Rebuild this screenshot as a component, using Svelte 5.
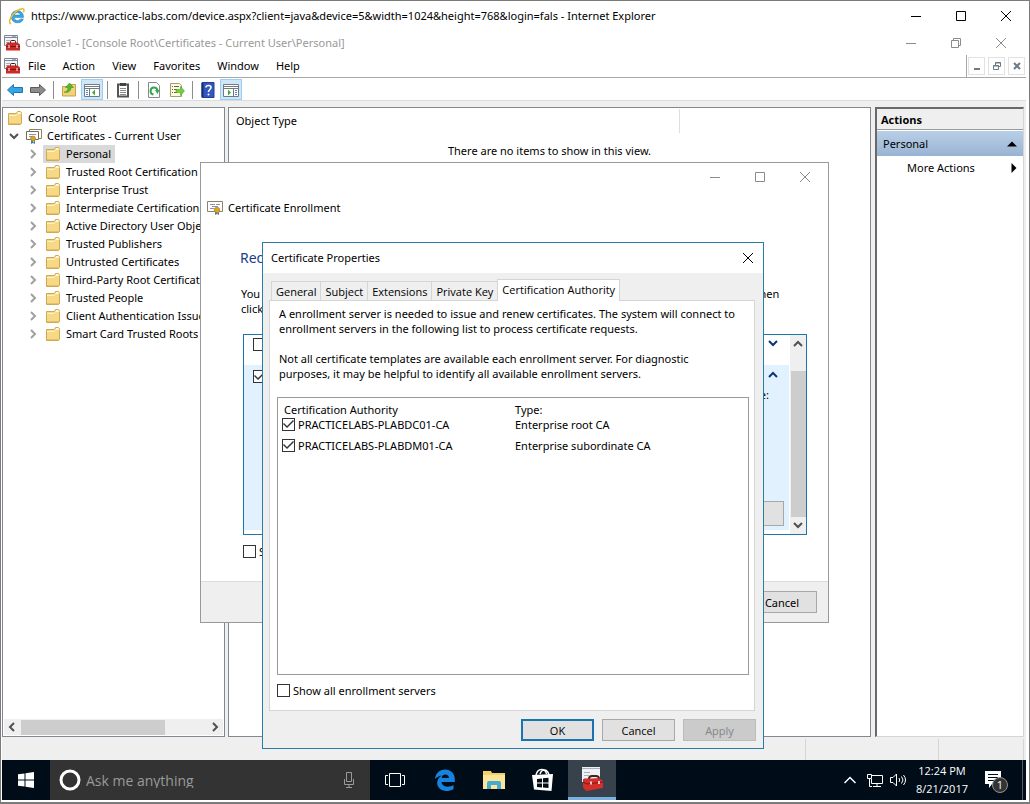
<script>
    const menus = ["File", "Action", "View", "Favorites", "Window", "Help"];

    const stores = [
        "Personal",
        "Trusted Root Certification Authorities",
        "Enterprise Trust",
        "Intermediate Certification Authorities",
        "Active Directory User Object",
        "Trusted Publishers",
        "Untrusted Certificates",
        "Third-Party Root Certification Authorities",
        "Trusted People",
        "Client Authentication Issuers",
        "Smart Card Trusted Roots",
    ];

    const tabs = ["General", "Subject", "Extensions", "Private Key", "Certification Authority"];

    let selected = $state("Personal");
    let activeTab = $state("Certification Authority");
    let showAll = $state(false);
    let authorities = $state([
        { name: "PRACTICELABS-PLABDC01-CA", type: "Enterprise root CA", checked: true },
        { name: "PRACTICELABS-PLABDM01-CA", type: "Enterprise subordinate CA", checked: true },
    ]);
</script>

{#snippet minimize()}
    <svg width="12" height="12" viewBox="0 0 12 12"><path d="M1 6.5h10" /></svg>
{/snippet}

{#snippet maximize()}
    <svg width="12" height="12" viewBox="0 0 12 12"><path d="M1.5 1.5h9v9h-9z" /></svg>
{/snippet}

{#snippet restore()}
    <svg width="12" height="12" viewBox="0 0 12 12"><path d="M1.5 3.5h7v7h-7zM3.5 3.5v-2h7v7h-2" /></svg>
{/snippet}

{#snippet close()}
    <svg width="12" height="12" viewBox="0 0 12 12"><path d="M1 1l10 10M11 1l-10 10" /></svg>
{/snippet}

{#snippet chevron(dir)}
    <svg class="chevron {dir}" width="10" height="10" viewBox="0 0 10 10"><path d="M3 1l4 4-4 4" /></svg>
{/snippet}

{#snippet folder()}
    <svg width="16" height="16" viewBox="0 0 16 16">
        <path d="M1.500 3.500h8l1-2h3l1 1v11l-1 1h-12z" fill="#f6d987" stroke="#d0a954" />
        <path d="M2 5.500h7l1.500-2h4" fill="none" stroke="#fff2c4" />
        <path d="M11 2.500h2" stroke="#fff" />
        <path d="M2 13.500h12" stroke="#e8bf62" />
    </svg>
{/snippet}

{#snippet certificate(stacked)}
    <svg width="16" height="16" viewBox="0 0 16 16">
        {#if stacked}
            <path d="M3.500 1.500h12v9h-12z" fill="#fff" stroke="#8b8468" />
            <path d="M.5 3.500h12v8h-12z" fill="#fff" stroke="#736d58" />
            <path d="M3 6.500h7M3 8.500h3" stroke="#8c93bd" />
            <path d="M5 11v5l2-1v-3M9 11v5l-2-1" fill="#3b83ad" />
            <circle cx="7" cy="10.500" r="2.500" fill="#dda51d" stroke="#a87913" stroke-width=".6" />
        {:else}
            <path d="M.5 2.500h15v10h-15z" fill="#fff" stroke="#8a846c" />
            <path d="M3 5.500h5M9 5.500h4M5 7.500h6M3 9.500h4" stroke="#8c93bd" />
            <path d="M8 11v5l2-1v-3M12 11v5l-2-1" fill="#3b83ad" />
            <circle cx="10" cy="11" r="2.800" fill="#dda51d" stroke="#a87913" stroke-width=".6" />
        {/if}
    </svg>
{/snippet}

{#snippet toolbox()}
    <svg width="16" height="16" viewBox="0 0 16 16">
        <path d="M.5.5h13v10H.5z" fill="#f2f4f7" stroke="#7e8791" />
        <path d="M0 2.500h14" stroke="#7e8791" />
        <path d="M2 5.500h4M2 7.500h3M8 1.500h4" stroke="#a5adb6" />
        <path d="M6.500 8V6.500q0-1 1-1h3q1 0 1 1V8" fill="none" stroke="#3b1715" />
        <path d="M3.500 7.500h10l2.500 2v6H2v-6z" fill="#cb2b27" />
        <path d="M2 11.500h14" stroke="#841411" />
        <path d="M5 10v3M13 10v3" stroke="#fff" />
    </svg>
{/snippet}

<main>
    <header class="titlebar browser">
        <svg width="18" height="18" viewBox="0 0 18 18">
            <path d="M15.500 10.500H6.200c.2 3.300 4.700 4 6.200 1.400h3c-2 5.800-12.200 5.200-12.200-2.400 0-7.800 12.700-8.400 12.300 1zM6.300 8h6c-.3-3-5.500-3.200-6 0z" fill="#3aa5e3" stroke="#1f7fc0" stroke-width=".5" />
            <path d="M3.200 16.800C-1.500 16 4.500 5 12 2.200c4-1.500 4.800.5 3.400 3.200" fill="none" stroke="#e9bb2d" stroke-width="1.500" />
        </svg>
        <h1>https://www.practice-labs.com/device.aspx?client=java&amp;device=5&amp;width=1024&amp;height=768&amp;login=fals - Internet Explorer</h1>
        <div class="controls">
            <button aria-label="Minimize">{@render minimize()}</button>
            <button aria-label="Maximize">{@render maximize()}</button>
            <button aria-label="Close">{@render close()}</button>
        </div>
    </header>

    <header class="titlebar console">
        {@render toolbox()}
        <h2>Console1 - [Console Root\Certificates - Current User\Personal]</h2>
        <div class="controls">
            <button aria-label="Minimize console">{@render minimize()}</button>
            <button aria-label="Restore console">{@render restore()}</button>
            <button aria-label="Close console">{@render close()}</button>
        </div>
    </header>

    <div class="menubar">
        {@render toolbox()}
        <nav>
            {#each menus as menu}
                <button>{menu}</button>
            {/each}
        </nav>
        <div class="mdi">
            <button aria-label="Minimize child">
                <svg width="10" height="10" viewBox="0 0 10 10"><path d="M2 8h6" stroke-width="2" /></svg>
            </button>
            <button aria-label="Restore child">
                <svg width="10" height="10" viewBox="0 0 10 10"><path d="M1.500 4.500h5v4h-5zM1 5h6M3.500 4V1.500h5v4H7M3 2h6" /></svg>
            </button>
            <button aria-label="Close child">
                <svg width="10" height="10" viewBox="0 0 10 10"><path d="M2 2l6 6M8 2l-6 6" stroke-width="2" /></svg>
            </button>
        </div>
    </div>

    <div class="toolbar">
        <button aria-label="Back">
            <svg width="18" height="16" viewBox="0 0 18 16"><path d="M1.500 8l6-5.500v3h9v5h-9v3z" fill="#35a5e5" stroke="#2674ad" /></svg>
        </button>
        <button aria-label="Forward">
            <svg width="18" height="16" viewBox="0 0 18 16"><path d="M16.500 8l-6-5.500v3h-9v5h9v3z" fill="#8c8c8c" stroke="#5c5c5c" /></svg>
        </button>
        <span class="divider"></span>
        <button aria-label="Up one level">
            <svg width="16" height="16" viewBox="0 0 16 16">
                <path d="M1.500 4.500h6l1-2h6v11.500h-13z" fill="#f2d27b" stroke="#c99f45" />
                <path d="M3 10c3 0 4-2 4-4.500H4.500L8.500 1l4 4.500H10c0 3.500-3 6-7 4.500z" fill="#4fba28" stroke="#338a17" stroke-width=".5" />
            </svg>
        </button>
        <button class="on" aria-label="Show or hide console tree">
            <svg width="16" height="16" viewBox="0 0 16 16">
                <path d="M.5 2.500h15v12H.5z" fill="#fff" stroke="#727b84" />
                <path d="M1 4.500h14M5.500 6v8M1 6.500h14" stroke="#727b84" />
                <path d="M2 8.500h2M2 10.500h2M2 12.500h2" stroke="#4e88ba" />
                <path d="M11 7.500v6L8 10.500z" fill="#42ad32" />
            </svg>
        </button>
        <span class="divider"></span>
        <button aria-label="Paste">
            <svg width="16" height="16" viewBox="0 0 16 16">
                <path d="M3 2.500h10v12H3z" fill="#fff" stroke="#555" stroke-width="2" />
                <path d="M5 1h6v3H5z" fill="#444" />
                <path d="M5 6.500h6M5 8.500h6M5 10.500h6M5 12.500h6" stroke="#8a8a8a" />
            </svg>
        </button>
        <span class="divider"></span>
        <button aria-label="Refresh">
            <svg width="16" height="16" viewBox="0 0 16 16">
                <path d="M2.500.5h8l3 3v12h-11z" fill="#fff" stroke="#858a8e" />
                <path d="M7.500 12.500a3.500 3.500 0 1 1 4-4" fill="none" stroke="#37a54b" stroke-width="2" />
                <path d="M13.500 8H9l2.500 4z" fill="#37a54b" />
            </svg>
        </button>
        <button aria-label="Export list">
            <svg width="16" height="16" viewBox="0 0 16 16">
                <path d="M1.500 1.500h9l2 2v11h-11z" fill="#fff9d8" stroke="#a39b78" />
                <path d="M3 4.500h1M3 7.500h1M3 10.500h1M5 4.500h5M5 7.500h3M5 10.500h3" stroke="#636363" />
                <path d="M7 7.500h4.500v-3l4 4.500-4 4.500v-3H7z" fill="#6fd13e" stroke="#389921" stroke-width=".5" />
            </svg>
        </button>
        <span class="divider"></span>
        <button aria-label="Help topics">
            <svg width="16" height="16" viewBox="0 0 16 16">
                <path d="M2 .5h12v15H2z" fill="#3157c1" stroke="#213f91" />
                <path d="M2.500 1v14" stroke="#1b2f70" stroke-width="2" />
                <path d="M6 5.500q0-2 2.500-2t2.500 2q0 1-1.200 2T8.500 10" fill="none" stroke="#fff" stroke-width="1.600" />
                <circle cx="8.500" cy="12.500" r="1" fill="#fff" />
            </svg>
        </button>
        <button class="on" aria-label="Show or hide action pane">
            <svg width="16" height="16" viewBox="0 0 16 16">
                <path d="M.5 2.500h15v12H.5z" fill="#fff" stroke="#727b84" />
                <path d="M1 4.500h14M10.500 6v8M1 6.500h14" stroke="#727b84" />
                <path d="M12 8.500h2M12 10.500h2M12 12.500h2" stroke="#4e88ba" />
                <path d="M5 7.500v6l3-3z" fill="#42ad32" />
            </svg>
        </button>
    </div>

    <section class="workspace">
        <aside class="tree">
            <div class="node">{@render folder()}<span>Console Root</span></div>
            <div class="node branch">
                {@render chevron("down")}
                {@render certificate(true)}
                <span>Certificates - Current User</span>
            </div>
            <ul>
                {#each stores as store}
                    <li>
                        {@render chevron("right")}
                        <button class:selected={selected === store} onclick={() => (selected = store)}>
                            {@render folder()}<span>{store}</span>
                        </button>
                    </li>
                {/each}
            </ul>
            <div class="hscroll">
                {@render chevron("left")}
                <div class="track"><div class="thumb"></div></div>
                {@render chevron("right")}
            </div>
        </aside>

        <section class="items">
            <div class="columns"><span>Object Type</span></div>
            <p>There are no items to show in this view.</p>
        </section>

        <aside class="actions">
            <h3>Actions</h3>
            <button class="group">
                Personal
                <svg width="10" height="6" viewBox="0 0 10 6"><path d="M0 5.500l5-5 5 5z" /></svg>
            </button>
            <button class="more">
                More Actions
                <svg width="6" height="10" viewBox="0 0 6 10"><path d="M.5 0l5 5-5 5z" /></svg>
            </button>
        </aside>
    </section>

    <footer class="status"><span></span><span></span></footer>

    <footer class="taskbar">
        <button class="start" aria-label="Start">
            <svg width="16" height="16" viewBox="0 0 16 16"><path d="M0 2.300L6.500 1.400v6.100H0zM7.500 1.200L16 0v7.500H7.500zM0 8.500h6.500v6.100L0 13.700zM7.500 8.500H16V16l-8.500-1.200z" fill="#fff" /></svg>
        </button>
        <div class="search">
            <svg width="22" height="22" viewBox="0 0 22 22"><circle cx="11" cy="11" r="9" fill="none" stroke="#fff" stroke-width="3" /></svg>
            <input type="text" placeholder="Ask me anything" aria-label="Ask me anything" />
            <svg width="12" height="18" viewBox="0 0 12 18"><path d="M3.500 1.500h5v9h-5zM1.500 8v5.500h9V8M6 13.500v3M3 16.500h6" fill="none" stroke="#9a9a9a" /></svg>
        </div>
        <div class="tasks">
            <button class="view" aria-label="Task view">
                <svg width="20" height="16" viewBox="0 0 20 16"><path d="M4.500 1.500h11v13h-11zM3 3.500H.5v9H3M17 3.500h2.500v9H17" fill="none" stroke="#fff" /></svg>
            </button>
            <button aria-label="Edge">
                <svg width="22" height="22" viewBox="0 0 22 22"><path d="M1 10C1.500 4.500 5.500.5 11 .5c6 0 9.800 4.300 9.800 9.500v3H7.500c.3 5 7.500 6 12 3v4.200C11 24.500 3 20.500 3.200 13.800 3.300 10.500 5 8 8 6.500 4.500 7 2.500 8.500 1 10zM7.600 9h7.300c0-4.500-6.500-5-7.300 0z" fill="#1683de" /></svg>
            </button>
            <button aria-label="File Explorer">
                <svg width="22" height="20" viewBox="0 0 22 20">
                    <path d="M0 1h8l1 2h13v16H0z" fill="#f5ce69" />
                    <path d="M0 5h22v14H0z" fill="#fce49b" />
                    <path d="M4 19v-6q0-2 2-2h10q2 0 2 2v6h-4v-4H8v4z" fill="#45acd0" />
                </svg>
            </button>
            <button aria-label="Store">
                <svg width="22" height="24" viewBox="0 0 22 24">
                    <path d="M4 7c1-4 3-5.500 5.500-5.500S14 3 14.500 6M8 6c1-3 2.500-4 4.500-4S16 3.500 17 7" fill="none" stroke="#fff" stroke-width="1.500" />
                    <path d="M0 7l21-1-1.500 17L2 21.500z" fill="#fff" />
                    <path d="M5 11l5-.6v4H5zM11 10.300l5.500-.6v4.700H11zM5 15.500h5v4l-5-.5zM11 15.500h5.500v4.600l-5.500-.5z" fill="#000c18" />
                </svg>
            </button>
            <button class="running" aria-label="Management Console">
                <svg width="24" height="24" viewBox="0 0 24 24">
                    <path d="M2 0h18v15H2z" fill="#eef1f5" />
                    <path d="M2 1.500h18M4 5.500h6M4 8.500h5M4 11.500h5" stroke="#a7afba" />
                    <path d="M9 12q0-3 3-3h4q3 0 3 3" fill="none" stroke="#45201f" stroke-width="2" />
                    <path d="M3 12l16-1 4 3v7l-17 3-3-4z" fill="#d3302b" />
                    <path d="M3 15l4 2 16-2" fill="none" stroke="#82110e" />
                    <path d="M11 14.500v3M19 14v3" stroke="#fff" stroke-width="1.500" />
                </svg>
            </button>
        </div>
        <div class="tray">
            <svg width="14" height="8" viewBox="0 0 14 8"><path d="M1.500 7L7 1.500 12.500 7" stroke-width="1.500" /></svg>
            <svg width="18" height="16" viewBox="0 0 18 16"><path d="M6 3.500h10.500v8H5.500V7M11 12v3M7 14.500h8M1.500 2.500h4v4h-4zM3.500 6.500v8H6" /></svg>
            <svg width="18" height="16" viewBox="0 0 18 16"><path d="M1.500 5.500H4l3.500-3.500v12L4 10.500H1.500zM10 6q1.500 2 0 4M12.500 4.500q3 3.500 0 7M14.500 3q4 5 0 10" /></svg>
            <time datetime="2017-08-21T12:24"><span>12:24 PM</span><span>8/21/2017</span></time>
            <button class="notifications" aria-label="Notifications">
                <svg width="16" height="18" viewBox="0 0 16 18"><path d="M0 0h16v13H7l-3 4v-4H0z" fill="#fff" /><path d="M3 3.500h10M3 6.500h10M3 9.500h6" stroke="#000c18" /></svg>
                <span class="badge">1</span>
            </button>
            <button class="desktop" aria-label="Show desktop"></button>
        </div>
    </footer>

    <section class="dialog enrollment">
        <div class="titlebar faded">
            <div class="controls">
                <button aria-label="Minimize enrollment">{@render minimize()}</button>
                <button aria-label="Maximize enrollment">{@render maximize()}</button>
                <button aria-label="Close enrollment">{@render close()}</button>
            </div>
        </div>
        <div class="caption">{@render certificate(false)}<span>Certificate Enrollment</span></div>
        <div class="request">
            <h2>Request Certificates</h2>
            <p>
                You can request the following types of certificates. Choose the certificates you need to request, and then<br />
                click Enroll.
            </p>
            <div class="templates">
                <div class="entries">
                    <div class="entry">
                        <input type="checkbox" aria-label="First template" />
                        {@render chevron("down")}
                    </div>
                    <div class="entry open">
                        <input type="checkbox" checked aria-label="Second template" />
                        {@render chevron("up")}
                        <span class="note">certificate:</span>
                        <button class="push" aria-label="Properties"></button>
                    </div>
                </div>
                <div class="vscroll">
                    {@render chevron("up")}
                    <div class="thumb"></div>
                    {@render chevron("down")}
                </div>
            </div>
            <label class="check"><input type="checkbox" />Show all templates</label>
        </div>
        <div class="buttons"><button class="push">Cancel</button></div>
    </section>

    <section class="dialog properties">
        <div class="titlebar">
            <h2>Certificate Properties</h2>
            <button class="close" aria-label="Close properties">{@render close()}</button>
        </div>
        <div class="tabs" role="tablist">
            {#each tabs as tab}
                <button role="tab" aria-selected={activeTab === tab} class:active={activeTab === tab} onclick={() => (activeTab = tab)}>{tab}</button>
            {/each}
        </div>
        <div class="panel">
            <p>A enrollment server is needed to issue and renew certificates. The system will connect to<br />enrollment servers in the following list to process certificate requests.</p>
            <p>Not all certificate templates are available each enrollment server. For diagnostic<br />purposes, it may be helpful to identify all available enrollment servers.</p>
            <div class="list">
                <table>
                    <thead>
                        <tr><th>Certification Authority</th><th>Type:</th></tr>
                    </thead>
                    <tbody>
                        {#each authorities as ca}
                            <tr>
                                <td><label class="check"><input type="checkbox" bind:checked={ca.checked} />{ca.name}</label></td>
                                <td>{ca.type}</td>
                            </tr>
                        {/each}
                    </tbody>
                </table>
            </div>
            <label class="check"><input type="checkbox" bind:checked={showAll} />Show all enrollment servers</label>
        </div>
        <div class="buttons">
            <button class="push default">OK</button>
            <button class="push">Cancel</button>
            <button class="push" disabled>Apply</button>
        </div>
    </section>
</main>

<style>
    :global(body) {
        margin: 0;
    }

    main {
        position: relative;
        display: flex;
        flex-direction: column;
        box-sizing: border-box;
        min-height: 100vh;
        padding: 0 3px 2px 1px;
        border: 1px solid #7b7b7b;
        border-bottom-width: 2px;
        background: #fff;
        color: #000;
        font-family: "Noto Sans", "Open Sans", sans-serif;
        font-size: 11px;
        line-height: 15px;
        overflow: hidden;
    }

    main :global(*) {
        box-sizing: border-box;
    }

    svg {
        display: block;
        flex: none;
    }

    h1, h2, h3, p, ul {
        margin: 0;
        padding: 0;
        font-size: inherit;
        font-weight: 400;
        list-style: none;
    }

    button {
        display: flex;
        align-items: center;
        padding: 0;
        border: none;
        background: none;
        color: inherit;
        font: inherit;
        white-space: nowrap;
    }

    input[type="checkbox"] {
        display: grid;
        flex: none;
        width: 13px;
        height: 13px;
        margin: 0;
        border: 1px solid #333;
        background: #fff;
        appearance: none;
    }

    input[type="checkbox"]:checked::after {
        content: "";
        background: #333;
        clip-path: polygon(0 5px, 1px 4px, 4px 7px, 10px 1px, 11px 2px, 4px 9px);
    }

    .chevron {
        fill: none;
        stroke: #505050;
        stroke-width: 2;
    }

    .chevron.down {
        transform: rotate(90deg);
    }

    .chevron.left {
        transform: rotate(180deg);
    }

    .chevron.up {
        transform: rotate(270deg);
    }

    .titlebar {
        display: flex;
        align-items: center;
        gap: 5px;
    }

    .titlebar.browser {
        height: 29px;
        padding: 0 14px 0 6px;
    }

    .titlebar h1 {
        flex: 1;
        white-space: nowrap;
    }

    .titlebar.console {
        height: 25px;
        padding: 0 19px 0 2px;
        color: #999;
    }

    .controls {
        display: flex;
        gap: 33px;
        margin-left: auto;
        fill: none;
        stroke: #000;
    }

    .console .controls, .faded .controls {
        stroke: #8c8c8c;
    }

    .menubar {
        display: flex;
        align-items: center;
        height: 23px;
        padding: 0 0 1px 2px;
        border-bottom: 1px solid #a8a8a8;
    }

    .menubar nav {
        display: flex;
        gap: 17px;
        padding-left: 8px;
    }

    .mdi {
        display: flex;
        align-items: center;
        gap: 3px;
        height: 22px;
        margin-left: auto;
        padding: 0 1px;
        border-left: 1px solid #a8a8a8;
        fill: none;
        stroke: #6d7b86;
    }

    .mdi button {
        justify-content: center;
        width: 17px;
        height: 18px;
        border: 1px solid #e2e2e2;
    }

    .toolbar {
        display: flex;
        align-items: center;
        gap: 1px;
        height: 23px;
        padding: 1px 0 0 2px;
        border-bottom: 1px solid #dcdcdc;
    }

    .toolbar button {
        justify-content: center;
        width: 22px;
        height: 21px;
    }

    .toolbar button.on {
        border: 1px solid #9ccdf2;
        background: #cde6f8;
    }

    .divider {
        width: 1px;
        height: 18px;
        margin: 0 3px;
        background: #8d8d8d;
    }

    .workspace {
        display: grid;
        flex: 1;
        grid-template-columns: 223px 1fr 150px;
        gap: 3px;
        padding: 6px 2px 0 0;
        background: #efefef;
    }

    .tree {
        display: flex;
        flex-direction: column;
        padding: 1px;
        border: 1px solid #828790;
        background: #fff;
        overflow: hidden;
    }

    .tree span {
        padding-bottom: 2px;
    }

    .node, .tree li, .tree li button {
        display: flex;
        align-items: center;
        gap: 5px;
        height: 18px;
        white-space: nowrap;
    }

    .node {
        padding-left: 3px;
    }

    .branch {
        padding-left: 5px;
    }

    .branch .chevron {
        margin-right: 2px;
    }

    .tree li {
        padding-left: 24px;
    }

    .tree li .chevron {
        stroke: #a0a0a0;
    }

    .tree li button {
        padding: 0 4px 0 2px;
    }

    .tree li button.selected {
        background: #d9d9d9;
    }

    .hscroll {
        display: flex;
        align-items: center;
        gap: 4px;
        height: 16px;
        margin-top: auto;
        padding: 0 3px;
        background: #efefef;
    }

    .track {
        flex: 1;
        height: 15px;
    }

    .hscroll .thumb {
        width: 78%;
        height: 15px;
    }

    .thumb {
        background: #cdcdcd;
    }

    .items {
        border: 1px solid #828790;
        background: #fff;
    }

    .columns {
        width: 451px;
        height: 24px;
        margin-top: 1px;
        padding: 4px 7px;
        border-right: 1px solid #dedede;
    }

    .items p {
        padding-top: 10px;
        text-align: center;
    }

    .actions {
        margin-left: 1px;
        border: 1px solid #d5d5d5;
        border-top: 2px solid #696969;
        border-left: 2px solid #696969;
        background: #fff;
    }

    .actions h3 {
        height: 21px;
        padding: 3px 4px;
        border-bottom: 1px solid #9a9a9a;
        background: #efefef;
        font-family: "Open Sans", "Noto Sans", sans-serif;
        font-weight: 700;
    }

    .actions button {
        justify-content: space-between;
        width: 100%;
        padding: 0 6px;
    }

    .actions .group {
        height: 25px;
        margin-top: 1px;
        background: linear-gradient(#b9cfe7, #98b3d3);
    }

    .actions .more {
        height: 23px;
        padding-left: 30px;
    }

    .status {
        display: flex;
        justify-content: flex-end;
        height: 23px;
        padding: 2px 2px 0 0;
        background: #efefef;
    }

    .status span {
        width: 133px;
        border-left: 1px solid #d5d5d5;
    }

    .status span:last-child {
        width: 86px;
        border-right: 1px solid #d5d5d5;
    }

    .taskbar {
        display: flex;
        height: 40px;
        background: #000c18;
        color: #fff;
        font-family: "Open Sans", "Noto Sans", sans-serif;
    }

    .start {
        justify-content: center;
        width: 48px;
    }

    .search {
        display: flex;
        align-items: center;
        gap: 5px;
        width: 320px;
        padding: 0 15px 0 9px;
        background: #333;
    }

    .search input {
        flex: 1;
        min-width: 0;
        padding: 0;
        border: none;
        outline: none;
        background: none;
        color: #fff;
        font: inherit;
        font-size: 14px;
    }

    .search input::placeholder {
        color: #9a9a9a;
    }

    .tasks {
        display: flex;
        gap: 1px;
    }

    .tasks button {
        justify-content: center;
        width: 48px;
    }

    .tasks .view {
        width: 50px;
    }

    .tasks .running {
        border-bottom: 3px solid #7ab1e3;
        background: #38424c;
    }

    .tray {
        display: flex;
        align-items: center;
        gap: 9px;
        margin-left: auto;
        padding-right: 3px;
        fill: none;
        stroke: #fff;
    }

    .tray svg:nth-child(2) {
        margin-right: -4px;
    }

    time {
        display: flex;
        flex-direction: column;
        align-items: center;
        line-height: 18px;
    }

    .notifications {
        position: relative;
        margin: 0 12px 0 8px;
        stroke: none;
    }

    .desktop {
        width: 1px;
        height: 40px;
        background: #545c64;
    }

    .badge {
        position: absolute;
        top: 6px;
        left: 7px;
        width: 16px;
        height: 16px;
        border: 1px solid #929292;
        border-radius: 50%;
        background: #333;
        line-height: 14px;
        text-align: center;
    }

    .dialog {
        position: absolute;
        background: #fff;
    }

    .enrollment {
        top: 161px;
        left: 199px;
        width: 629px;
        border: 1px solid #999;
    }

    .enrollment .titlebar {
        height: 28px;
        padding-right: 17px;
    }

    .caption {
        display: flex;
        align-items: center;
        gap: 5px;
        height: 32px;
        padding-left: 6px;
    }

    .request {
        padding: 25px 21px 22px 42px;
    }

    .request h2 {
        margin-left: -3px;
        color: #1b3e8c;
        font-size: 14px;
        line-height: 20px;
    }

    .request p {
        padding: 18px 0;
        margin-left: -2px;
        white-space: nowrap;
    }

    .templates {
        display: flex;
        margin-bottom: 9px;
        border: 1px solid #1c76a9;
    }

    .entries {
        flex: 1;
        padding-bottom: 4px;
    }

    .entry {
        display: grid;
        grid-template-columns: 1fr auto;
        align-content: start;
        height: 30px;
        padding: 3px 11px 0 9px;
    }

    .entry .chevron {
        stroke: #0c3578;
    }

    .entry.open {
        grid-template-rows: 17px 1fr auto;
        align-content: stretch;
        height: 165px;
        padding: 5px 5px 4px 9px;
        background: #e1f2fe;
    }

    .entry.open .chevron {
        margin-right: 6px;
    }

    .entry .note {
        grid-column: 1 / 3;
        padding-right: 15px;
        text-align: right;
    }

    .entry .push {
        grid-column: 1 / 3;
        justify-self: end;
        width: 75px;
        height: 25px;
    }

    .vscroll {
        display: flex;
        flex-direction: column;
        align-items: center;
        justify-content: space-between;
        width: 17px;
        padding: 4px 1px;
        border-left: 1px solid #fff;
        background: #efefef;
    }

    .vscroll .thumb {
        width: 15px;
        height: 146px;
        margin-top: 18px;
    }

    .check {
        display: flex;
        align-items: center;
        gap: 3px;
    }

    .buttons {
        display: flex;
        justify-content: flex-end;
        gap: 8px;
    }

    .enrollment .buttons {
        padding: 9px 11px;
        border-top: 1px solid #dcdcdc;
        background: #efefef;
    }

    .push {
        justify-content: center;
        width: 73px;
        height: 22px;
        border: 1px solid #a8a8a8;
        background: #e1e1e1;
    }

    .enrollment .buttons .push {
        width: 70px;
    }

    .properties .push {
        font-family: "Open Sans", "Noto Sans", sans-serif;
    }

    .push.default {
        border: 2px solid #1b74b0;
    }

    .push:disabled {
        border-color: #bcbcbc;
        background: #cbcbcb;
        color: #858585;
    }

    .properties {
        top: 241px;
        left: 261px;
        width: 502px;
        padding: 0 7px 7px 6px;
        border: 1px solid #2b7ba8;
        background: #efefef;
    }

    .properties .titlebar {
        height: 30px;
        margin: 0 -7px 0 -6px;
        padding: 0 9px 1px 8px;
        background: #fff;
    }

    .properties .close {
        margin-left: auto;
        fill: none;
        stroke: #000;
    }

    .tabs {
        display: flex;
        align-items: flex-end;
        height: 27px;
        padding-left: 3px;
        font-family: "Open Sans", "Noto Sans", sans-serif;
    }

    .tabs button {
        height: 19px;
        margin-left: -1px;
        padding: 0 4px;
        border: 1px solid #d5d5d5;
        border-bottom: none;
        background: #efefef;
    }

    .tabs button.active {
        z-index: 1;
        height: 22px;
        margin-bottom: -1px;
        padding-bottom: 3px;
        background: #fff;
    }

    .panel {
        margin-right: 1px;
        padding: 5px 5px 12px 7px;
        border: 1px solid #d5d5d5;
        background: #fff;
    }

    .panel p {
        padding: 0 0 15px 2px;
        white-space: nowrap;
    }

    .list {
        height: 278px;
        margin: 1px 0 8px;
        padding: 7px 4px;
        border: 1px solid #999;
    }

    table {
        width: 100%;
        border-collapse: collapse;
        table-layout: fixed;
    }

    th, td {
        height: 21px;
        padding: 0;
        font-weight: 400;
        text-align: left;
    }

    th {
        height: 9px;
        padding-left: 2px;
        line-height: 9px;
    }

    th:first-child {
        width: 233px;
    }

    th:last-child {
        padding-left: 0;
    }

    .properties .buttons {
        padding-top: 8px;
    }
</style>
